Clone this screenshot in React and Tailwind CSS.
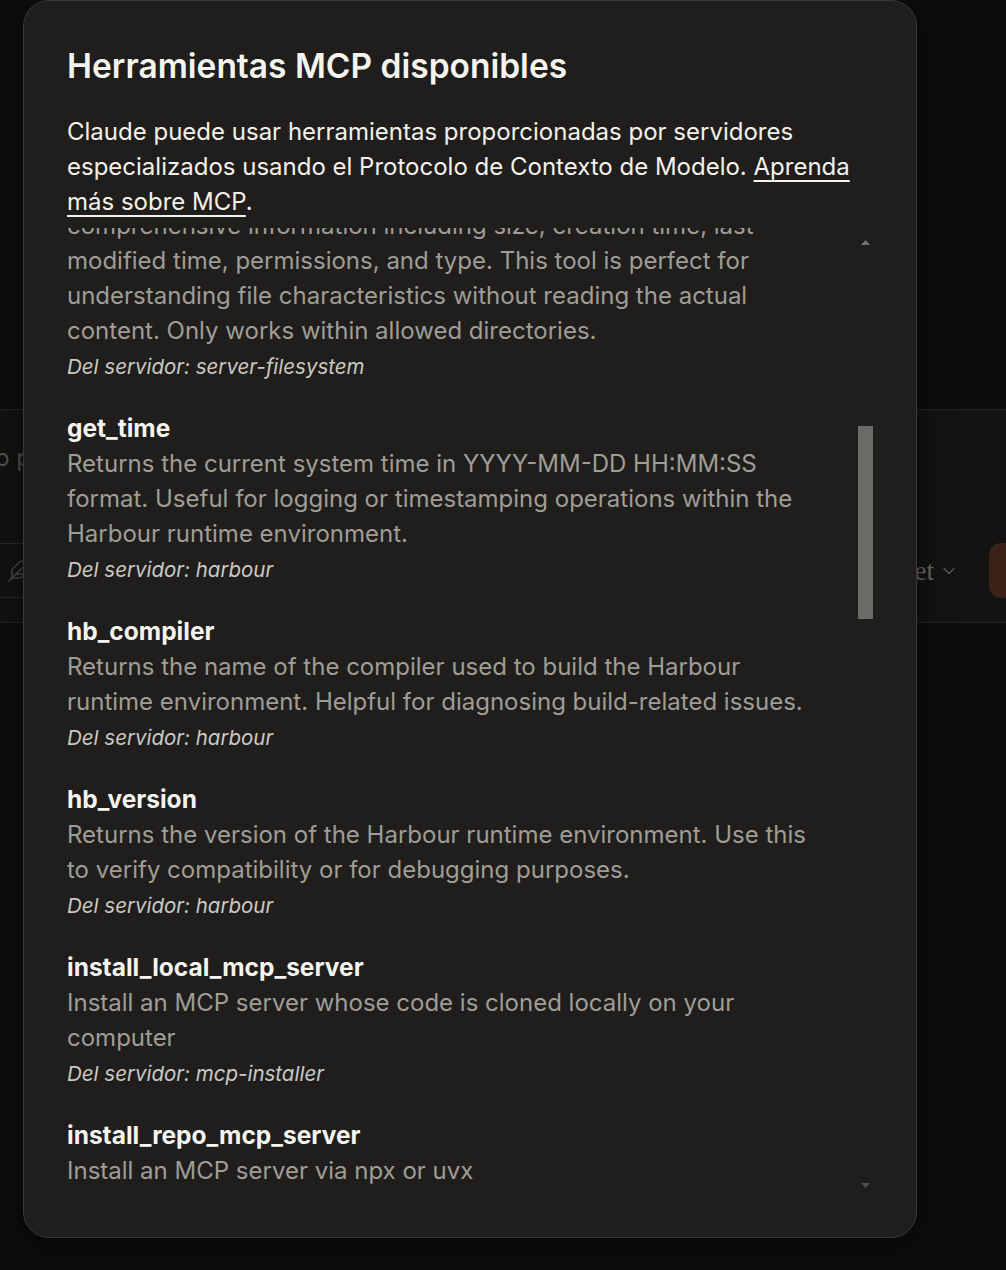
import React, { useLayoutEffect, useRef } from "react";
import { Feather, ChevronDown, ArrowUp } from "lucide-react";

const FS = "server-filesystem";
const HB = "harbour";
const MI = "mcp-installer";

const tools = [
  {
    name: "create_directory",
    server: FS,
    lines: [
      "Create a new directory or ensure a directory exists. Can create",
      "multiple nested directories in one operation. If the directory",
      "already exists, this operation will succeed silently. Perfect for",
      "setting up directory structures for projects or ensuring required",
      "paths exist. Only works within allowed directories.",
    ],
  },
  {
    name: "directory_tree",
    server: FS,
    lines: [
      "Get a recursive tree view of files and directories as a JSON",
      "structure. Each entry includes 'name', 'type' (file/directory),",
      "and 'children' for directories. Files have no children array,",
      "while directories always have a children array (which may be",
      "empty). The output is formatted with 2-space indentation for",
      "readability. Only works within allowed directories.",
    ],
  },
  {
    name: "edit_file",
    server: FS,
    lines: [
      "Make line-based edits to a text file. Each edit replaces exact",
      "line sequences with new content. Returns a git-style diff",
      "showing the changes made. Only works within allowed",
      "directories.",
    ],
  },
  {
    name: "get_file_info",
    server: FS,
    lines: [
      "Retrieve detailed metadata about a file or directory. Returns",
      "comprehensive information including size, creation time, last",
      "modified time, permissions, and type. This tool is perfect for",
      "understanding file characteristics without reading the actual",
      "content. Only works within allowed directories.",
    ],
  },
  {
    name: "get_time",
    server: HB,
    lines: [
      "Returns the current system time in YYYY-MM-DD HH:MM:SS",
      "format. Useful for logging or timestamping operations within the",
      "Harbour runtime environment.",
    ],
  },
  {
    name: "hb_compiler",
    server: HB,
    lines: [
      "Returns the name of the compiler used to build the Harbour",
      "runtime environment. Helpful for diagnosing build-related issues.",
    ],
  },
  {
    name: "hb_version",
    server: HB,
    lines: [
      "Returns the version of the Harbour runtime environment. Use this",
      "to verify compatibility or for debugging purposes.",
    ],
  },
  {
    name: "install_local_mcp_server",
    server: MI,
    lines: ["Install an MCP server whose code is cloned locally on your", "computer"],
  },
  {
    name: "install_repo_mcp_server",
    server: MI,
    lines: ["Install an MCP server via npx or uvx"],
  },
  {
    name: "list_allowed_directories",
    server: FS,
    lines: [
      "Returns the list of directories that this server is allowed to",
      "access. Use this to understand which directories are available",
      "before trying to access files.",
    ],
  },
  {
    name: "list_directory",
    server: FS,
    lines: [
      "Get a detailed listing of all files and directories in a specified",
      "path. Results clearly distinguish between files and directories",
      "with [FILE] and [DIR] prefixes. Only works within allowed",
      "directories.",
    ],
  },
  {
    name: "list_directory_with_sizes",
    server: FS,
    lines: [
      "Get a detailed listing of all files and directories in a specified",
      "path, including sizes. Useful for understanding directory",
      "structure and finding specific files within a directory. Only",
      "works within allowed directories.",
    ],
  },
  {
    name: "move_file",
    server: FS,
    lines: [
      "Move or rename files and directories. Can move files between",
      "directories and rename them in a single operation. If the",
      "destination exists, the operation will fail. Works across",
      "different directories and can be used for simple renaming.",
      "Both source and destination must be within allowed directories.",
    ],
  },
  {
    name: "read_file",
    server: FS,
    lines: [
      "Read the complete contents of a file from the file system.",
      "Handles various text encodings and provides detailed error",
      "messages if the file cannot be read. Use this tool when you",
      "need to examine the contents of a single file. Only works",
      "within allowed directories.",
    ],
  },
  {
    name: "read_media_file",
    server: FS,
    lines: [
      "Read an image or audio file. Returns the base64 encoded data",
      "and MIME type as a content block that can be displayed or",
      "analyzed. Only works within allowed directories.",
    ],
  },
  {
    name: "read_multiple_files",
    server: FS,
    lines: [
      "Read the contents of multiple files simultaneously. This is more",
      "efficient than reading files one by one when you need to analyze",
      "or compare multiple files. Each file's content is returned with its",
      "path as a reference. Failed reads for individual files won't stop",
      "the entire operation. Only works within allowed directories.",
    ],
  },
  {
    name: "read_text_file",
    server: FS,
    lines: [
      "Read the complete contents of a file from the file system as",
      "text. Handles various text encodings and provides detailed error",
      "messages if the file cannot be read. Use the 'head' parameter to",
      "read only the first N lines of a file, or the 'tail' parameter to",
      "read only the last N lines of a file. Only works within allowed",
      "directories.",
    ],
  },
  {
    name: "run_prg",
    server: HB,
    lines: [
      "Compiles and runs a Harbour PRG source file and returns its",
      "standard output. Useful for testing snippets of Harbour code",
      "or running small utilities inside the Harbour runtime",
      "environment. Compilation errors are returned as plain text",
      "so they can be inspected and fixed.",
    ],
  },
  {
    name: "search_files",
    server: FS,
    lines: [
      "Recursively search for files and directories matching a pattern.",
      "Searches through all subdirectories from the starting path. The",
      "search is case-insensitive and matches partial names. Returns",
      "full paths to all matching items. Great for finding files when",
      "you don't know their exact location. Only searches within allowed directories.",
    ],
  },
  {
    name: "write_file",
    server: FS,
    lines: [
      "Create a new file or completely overwrite an existing file with",
      "new content. Use with caution as it will overwrite existing files",
      "without warning. Only works within allowed directories.",
    ],
  },
];

function Tool({ t }) {
  return (
    <div>
      <div className="text-[24.5px] leading-[30px] font-bold text-[#f5f4ef]">{t.name}</div>
      <div className="mt-[3px] text-[24px] leading-[35px] text-[#9f9d95]">
        {t.lines.map((l, i) => (
          <span key={i} className="block whitespace-nowrap">
            {l}
          </span>
        ))}
      </div>
      <div className="mt-[5px] text-[20.5px] leading-[28px] italic text-[#cbc9c1]">Del servidor: {t.server}</div>
    </div>
  );
}

function Scrollbar() {
  return (
    <div className="pointer-events-none absolute top-0 right-0 bottom-0 flex w-[15px] flex-col items-center">
      <div className="flex h-[15px] w-full items-start justify-center pt-[12px]">
        <svg width="9" height="5" viewBox="0 0 9 5" className="shrink-0">
          <path d="M0 5 L4.5 0 L9 5 Z" fill="#73716c" />
        </svg>
      </div>
      <div className="mt-[183px] h-[193px] w-full bg-[#6b6a65]" />
      <div className="flex-1" />
      <div className="flex h-[15px] w-full items-start justify-center pt-[5px]">
        <svg width="9" height="5" viewBox="0 0 9 5" className="shrink-0">
          <path d="M0 0 L4.5 5 L9 0 Z" fill="#4f4e4a" />
        </svg>
      </div>
    </div>
  );
}

export default function App() {
  const scrollRef = useRef(null);
  useLayoutEffect(() => {
    if (scrollRef.current) scrollRef.current.scrollTop = 915;
  }, []);

  return (
    <div className="relative h-[1270px] w-full overflow-hidden bg-[#0d0d0c] [font-family:Inter,'Noto_Sans',sans-serif]">
      {/* page behind the dialog */}
      <div className="pt-[409px]">
        <div className="flex h-[214px] flex-col border-y border-[#262624] bg-[#131312]">
          <div className="mt-[33px] -ml-[70px] whitespace-nowrap text-[24px] leading-[30px] text-[#55544f]">
            ¿Cómo puedo ayudarte hoy?
          </div>
          <div className="mt-[70px] flex h-[55px] items-center justify-between">
            <div className="-ml-[12px] flex h-[55px] w-[60px] items-center justify-center rounded-xl border border-[#2a2a28]">
              <Feather className="ml-[2px] h-[24px] w-[24px] text-[#4d4c48]" strokeWidth={1.5} />
            </div>
            <div className="-mr-[38px] flex items-center gap-[30px]">
              <div className="flex items-center gap-[5px] text-[27px] leading-[30px] text-[#6a6964]">
                <span className="[font-family:'Liberation_Serif',serif]">Claude 3.7 Sonnet</span>
                <ChevronDown className="h-[20px] w-[20px] text-[#5d5c58]" strokeWidth={1.5} />
              </div>
              <div className="flex h-[55px] w-[55px] items-center justify-center rounded-xl bg-[#3b2219]">
                <ArrowUp className="h-6 w-6 text-[#6b5048]" />
              </div>
            </div>
          </div>
        </div>
      </div>

      {/* dialog overlay */}
      <div className="absolute inset-0 pl-[23px]">
        <div className="flex h-[1238px] w-[894px] flex-col rounded-[26px] border border-[#3a3935] bg-[#1f1e1d] px-[43px] pt-[43px] pb-[44px] shadow-[0_8px_32px_rgba(0,0,0,0.55)]">
          <h2 className="text-[33.5px] leading-[44px] font-semibold text-[#f5f4ef]">Herramientas MCP disponibles</h2>
          <p className="mt-[26px] text-[24px] leading-[35px] text-[#f3f1ea]">
            Claude puede usar herramientas proporcionadas por servidores
            <br />
            especializados usando el Protocolo de Contexto de Modelo.{" "}
            <a className="underline decoration-[2px] underline-offset-[5px]">Aprenda</a>
            <br />
            <a className="underline decoration-[2px] underline-offset-[5px]">más sobre MCP</a>.
          </p>
          <div className="relative mt-[9px] min-h-0 flex-1">
            <div ref={scrollRef} className="h-full overflow-y-auto pr-[15px] [scrollbar-width:none]">
              <div className="flex flex-col gap-8 pt-[8px] pb-[8px]">
                {tools.map((t) => (
                  <Tool key={t.name} t={t} />
                ))}
              </div>
            </div>
            <Scrollbar />
          </div>
        </div>
      </div>
    </div>
  );
}
